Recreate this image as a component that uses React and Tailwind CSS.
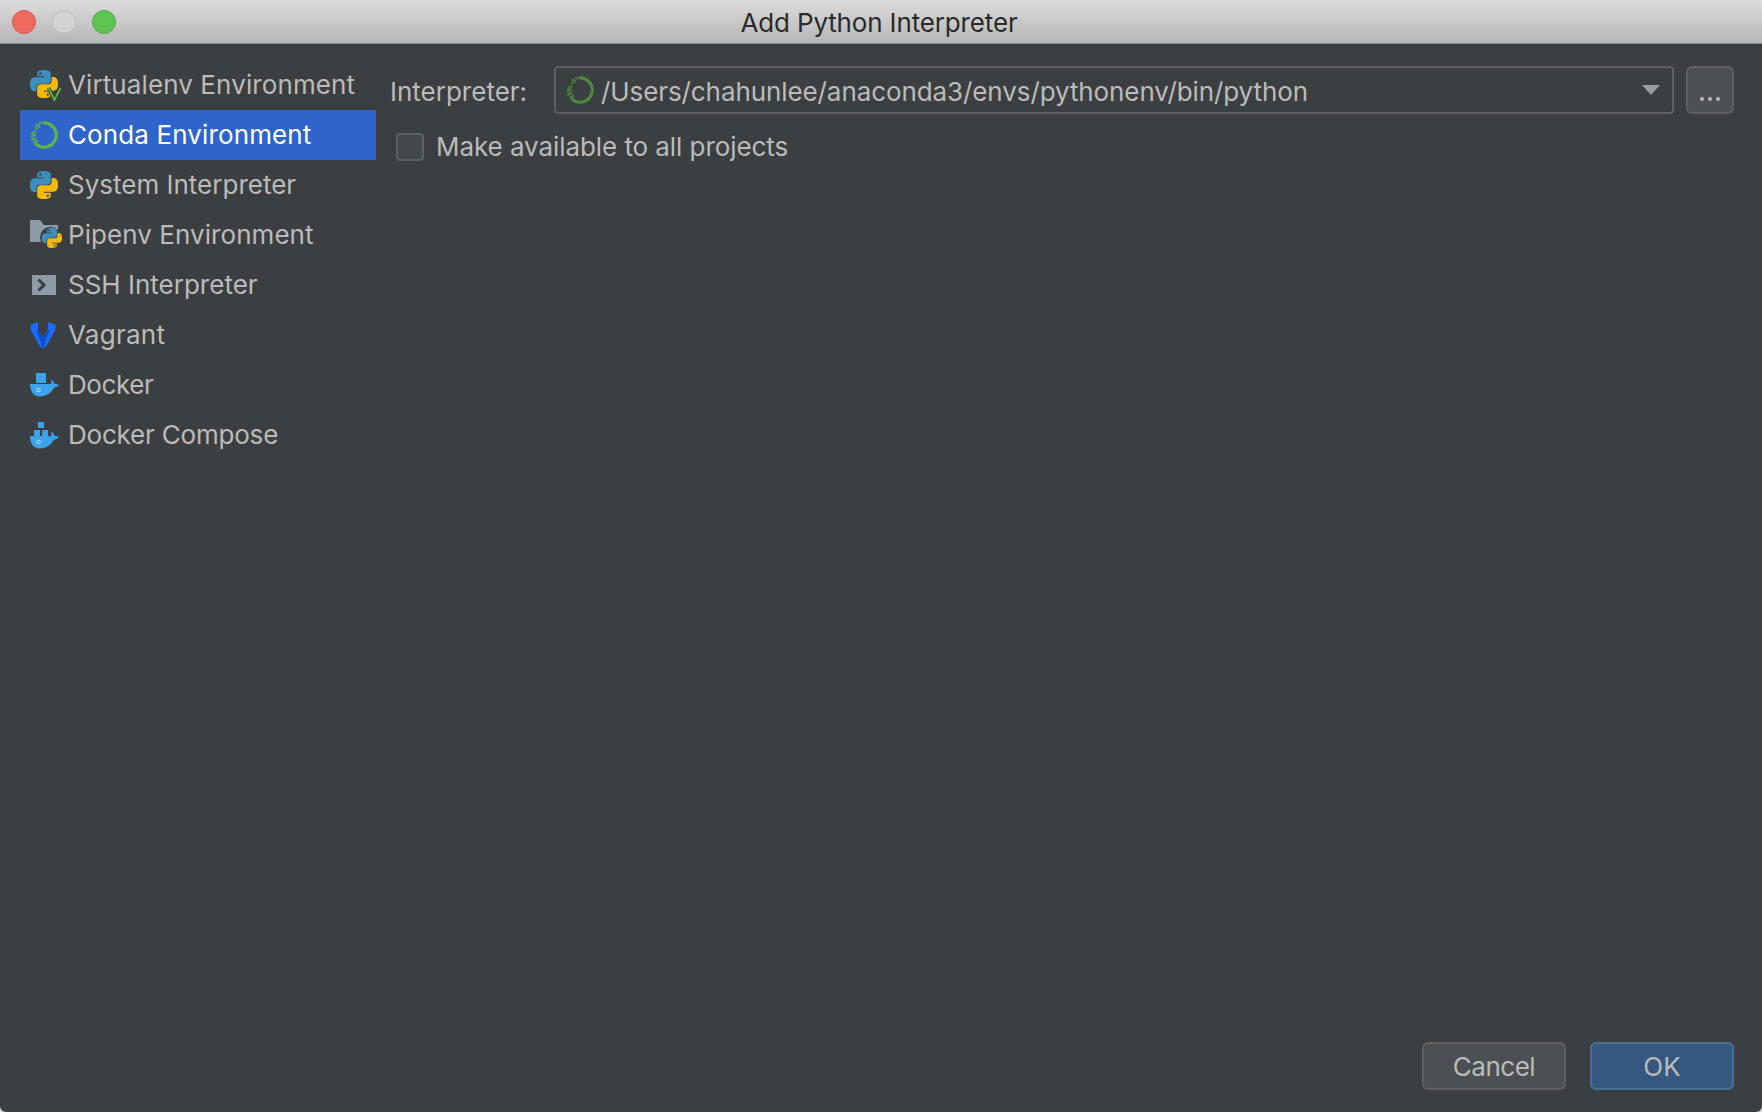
const PY_BLUE = 'M54.9 0C26.8 0 28.5 12.2 28.5 12.2v12.6h26.8v3.8H17.9S0 26.6 0 55c0 28.4 15.6 27.4 15.6 27.4h9.3V69.2s-.5-15.6 15.4-15.6h26.5s14.9.2 14.9-14.4V15.1S84 0 54.9 0zM40.2 8.5a4.8 4.8 0 1 1 0 9.6 4.8 4.8 0 0 1 0-9.6z'

const WHALE = 'M0 11H21.5C21.5 9.5 21.3 8 21 6.5C23 7.5 24 9 24.3 10.5L29 12C27.5 14 25.5 14.5 24 14.5C21.5 20 16 23.5 9.5 23.5C3.5 23.5 0 18 0 11Z'

function PythonMark({ className }) {
  return (
    <svg viewBox="0 0 110 110" className={className}>
      <path d={PY_BLUE} fill="#3d8fbd" fillRule="evenodd" />
      <path d={PY_BLUE} fill="#f2b90f" fillRule="evenodd" transform="rotate(180 55 55)" />
    </svg>
  )
}

function VirtualenvIcon() {
  return (
    <div className="relative w-[30px] h-[30px]">
      <PythonMark className="w-7 h-7" />
      <svg viewBox="0 0 15 14" className="absolute left-[17px] top-[17px] w-[15px] h-[14px]">
        <path d="M1.5 1 L7.5 13 L13.5 1" fill="none" stroke="#3c3f41" strokeWidth="3.6" />
        <path d="M1.5 1 L7.5 13 L13.5 1" fill="none" stroke="#5bb53c" strokeWidth="1.8" />
      </svg>
    </div>
  )
}

function CondaIcon({ color }) {
  const dots = [[1.5, 11], [4, 9.5], [1, 14], [3.6, 13], [1.5, 17], [4, 16.5], [3.5, 20], [6, 19], [5.5, 6], [8, 4], [5.5, 2.8], [9, 1.2], [12, 0.6]]
  return (
    <svg viewBox="0 0 28 28" className="w-7 h-7">
      <path d="M14 1.8 A12.2 12.2 0 1 1 5.4 22.6" fill="none" stroke={color} strokeWidth="3.2" />
      {dots.map(([x, y], i) => (
        <rect key={i} x={x} y={y} width="2.2" height="2.2" fill={color} transform={`rotate(45 ${x + 1} ${y + 1})`} />
      ))}
    </svg>
  )
}

function PipenvIcon() {
  return (
    <div className="relative w-[32px] h-[30px]">
      <svg viewBox="0 0 28 22" className="absolute left-0 top-0 w-7 h-[22px]">
        <path d="M0 0H10L14 5H28V22H0Z" fill="#8c9ba5" />
      </svg>
      <div className="absolute left-[10px] top-[7px] w-[21px] h-[21px] rounded-full bg-[#3c3f41]" />
      <PythonMark className="absolute left-[12px] top-[8px] w-5 h-5" />
    </div>
  )
}

function SshIcon() {
  return (
    <svg viewBox="0 0 24 20" className="w-6 h-5 ml-0.5">
      <rect width="24" height="20" fill="#8c9ba5" />
      <path d="M6.5 4.5 L12 10 L6.5 15.5" fill="none" stroke="#3c3f41" strokeWidth="3" />
    </svg>
  )
}

function VagrantIcon() {
  return (
    <svg viewBox="0 0 26 27" className="w-[26px] h-[27px]">
      <path d="M0.5 3 L8 0 L8 7 L13 16 L18 7 L18 0 L25.5 3 L25.5 7 L16.5 24 L13 26.5 L9.5 24 L0.5 7 Z" fill="#1a6bff" />
      <path d="M8 7 L13 16 L13 26.5 L11 21 L6.5 9 Z" fill="#0f4ec4" />
      <path d="M18 7 L13 16 L13 26.5 L15 21 L19.5 9 Z" fill="#0f4ec4" />
    </svg>
  )
}

function DockerIcon({ compose }) {
  if (compose) {
    return (
      <svg viewBox="0 0 30 27" className="w-[30px] h-[27px]">
        <g fill="#3ca2ee">
          <rect x="8" y="0" width="6" height="6" />
          <rect x="4" y="8" width="6" height="6" />
          <rect x="12" y="8" width="6" height="6" />
        </g>
        <path d={WHALE} transform="translate(0 3)" fill="#3ca2ee" />
        <circle cx="8.5" cy="20" r="1.8" fill="none" stroke="#c6e4fa" strokeWidth="0.9" />
      </svg>
    )
  }
  return (
    <svg viewBox="0 0 30 24" className="w-[30px] h-6">
      <rect x="6" y="0" width="10" height="10" fill="#3ca2ee" />
      <path d={WHALE} fill="#3ca2ee" />
      <circle cx="8.5" cy="17" r="1.8" fill="none" stroke="#c6e4fa" strokeWidth="0.9" />
    </svg>
  )
}

const items = [
  { name: 'Virtualenv Environment', icon: <VirtualenvIcon />, tracking: 'tracking-[0.1px]' },
  { name: 'Conda Environment', icon: <CondaIcon color="#62b543" />, selected: true, tracking: 'tracking-[0.12px]' },
  { name: 'System Interpreter', icon: <PythonMark className="w-7 h-7" /> },
  { name: 'Pipenv Environment', icon: <PipenvIcon />, tracking: 'tracking-[0.06px]' },
  { name: 'SSH Interpreter', icon: <SshIcon /> },
  { name: 'Vagrant', icon: <VagrantIcon />, tracking: 'tracking-[0.25px]' },
  { name: 'Docker', icon: <DockerIcon />, tracking: 'tracking-[-0.4px]' },
  { name: 'Docker Compose', icon: <DockerIcon compose />, tracking: 'tracking-[-0.2px]' },
]

export default function App() {
  return (
    <div className="w-full h-screen flex flex-col bg-[#d8d8d8] text-[#bbbbbb] text-[26px] font-['Inter',sans-serif] overflow-hidden">
      <div className="relative h-[44px] shrink-0 flex items-center justify-center bg-gradient-to-b from-[#dcdcdc] to-[#b6b6b6] border-b border-[#8a8a8a] text-[#2a2a2a]">
        <div className="absolute left-3 top-2.5 flex gap-4">
          <div className="w-6 h-6 rounded-full bg-[#ee6a5f] border border-[#d8564c]" />
          <div className="w-6 h-6 rounded-full bg-[#d3d3d3] border border-[#bdbdbd]" />
          <div className="w-6 h-6 rounded-full bg-[#5fc453] border border-[#4ca93f]" />
        </div>
        <span className="pt-0.5 pr-1 tracking-[-0.15px]">Add Python Interpreter</span>
      </div>

      <div className="flex-1 flex flex-col min-h-0 bg-[#3c3f41] rounded-b-md">
        <div className="flex-1 flex min-h-0">
          <div className="w-[376px] shrink-0 pl-5 pt-4">
            {items.map(item => (
              <div
                key={item.name}
                className={`h-[50px] flex items-center ${item.selected ? 'bg-[#2f65ca] text-white' : ''}`}
              >
                <div className="w-[49px] pl-2.5 flex items-center shrink-0">{item.icon}</div>
                <span className={`-ml-px pb-px ${item.tracking || ''}`}>{item.name}</span>
              </div>
            ))}
          </div>

          <div className="flex-1 pt-[22px] pl-[14px] pr-7">
            <div className="flex items-center">
              <span className="w-[164px] shrink-0 pt-[3px]">Interpreter:</span>
              <div className="flex-1 h-12 flex items-center pl-2.5 pr-[12px] rounded border-2 border-[#5e6060]">
                <CondaIcon color="#4c8a3d" />
                <span className="ml-[7px] pt-[3px] flex-1 tracking-[-0.09px]">/Users/chahunlee/anaconda3/envs/pythonenv/bin/python</span>
                <svg viewBox="0 0 18 10" className="w-[18px] h-[10px]">
                  <path d="M0 0H18L9 10Z" fill="#9a9da1" />
                </svg>
              </div>
              <div className="ml-3 w-12 h-12 shrink-0 flex items-end justify-center pb-[11px] gap-1 rounded-md border-2 border-[#5e6060] bg-[#4c5052]">
                <div className="w-1 h-1 rounded-full bg-[#bbbbbb]" />
                <div className="w-1 h-1 rounded-full bg-[#bbbbbb]" />
                <div className="w-1 h-1 rounded-full bg-[#bbbbbb]" />
              </div>
            </div>
            <div className="flex items-center mt-[13px] ml-1.5">
              <div className="w-7 h-7 rounded border-2 border-[#5e6060] bg-[#43494a]" />
              <span className="ml-3 tracking-[-0.07px]">Make available to all projects</span>
            </div>
          </div>
        </div>

        <div className="flex justify-end gap-6 pr-7 pb-[22px]">
          <button className="w-36 h-12 rounded-md border-2 border-[#5e6060] bg-[#4c5052] tracking-[-0.5px]">Cancel</button>
          <button className="w-36 h-12 rounded-md border-2 border-[#4a6f94] bg-[#365880]">OK</button>
        </div>
      </div>
    </div>
  )
}
